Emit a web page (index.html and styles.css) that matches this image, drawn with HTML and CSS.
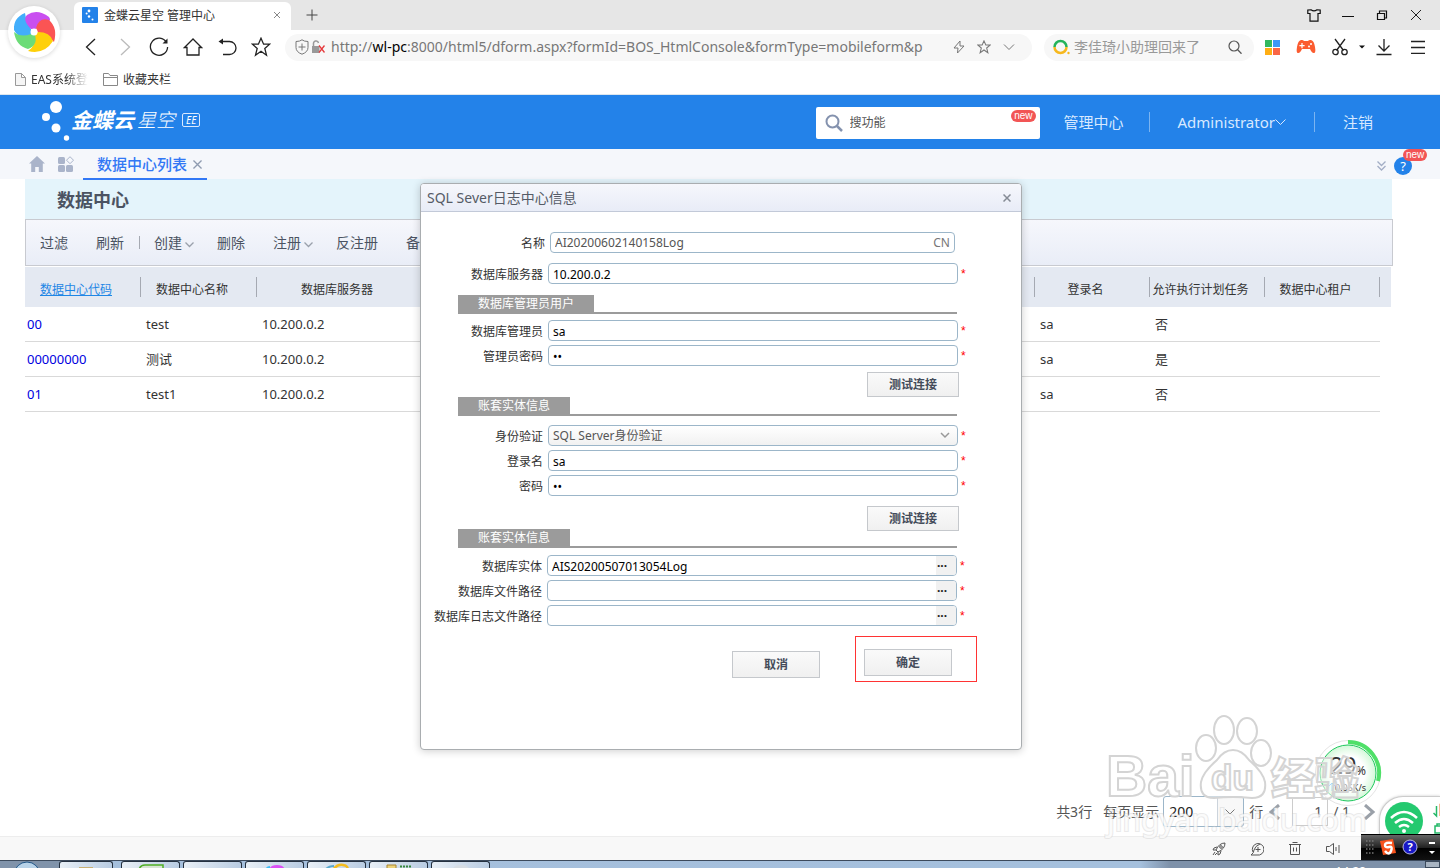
FILE: index.html
```
<!DOCTYPE html>
<html lang="zh-CN">
<head>
  <meta charset="UTF-8">
  <meta name="viewport" content="width=device-width, initial-scale=1.0">
  <title>金蝶云星空 管理中心</title>
  <link rel="stylesheet" href="styles.css">
</head>
<body>

<!-- browser window -->
<div class="browser">
  <div class="tabstrip">
    <div class="tab">
      <svg class="favicon" width="16" height="16" viewBox="0 0 16 16"><rect width="16" height="16" rx="1" fill="#2382e9"/><g fill="#fff"><circle cx="7" cy="4" r="1.4"/><circle cx="4.600" cy="6.500" r="1"/><circle cx="7" cy="9.500" r="1.200"/><circle cx="10.500" cy="12.500" r="1"/></g></svg>
      <span class="tab-title">金蝶云星空 管理中心</span>
      <button class="tab-close" aria-label="关闭标签"><svg width="8" height="8" viewBox="0 0 8 8"><path d="M1 1l6 6M7 1L1 7" stroke="#888" fill="none"/></svg></button>
    </div>
    <button class="tab-add" aria-label="新标签"><svg width="12" height="12" viewBox="0 0 12 12"><path d="M6 .5v11M.5 6h11" stroke="#444" fill="none"/></svg></button>
    <div class="window-buttons">
      <button aria-label="皮肤"><svg width="14" height="13" viewBox="0 0 14 13"><path d="M4 .8L.8 1v3.500H3v7.700h8V4.500h2.200V1L10 .8Q7 3 4 .8z" stroke="#111" stroke-width="1.200" fill="none"/></svg></button>
      <button aria-label="最小化"><svg width="12" height="12" viewBox="0 0 12 12"><path d="M0 7.500h12" stroke="#111"/></svg></button>
      <button aria-label="还原"><svg width="12" height="12" viewBox="0 0 12 12"><path d="M1.500 4.500h7v6h-7zM3.500 4V2h7v7H9" stroke="#111" stroke-width="1.200" fill="none"/></svg></button>
      <button aria-label="关闭"><svg width="12" height="12" viewBox="0 0 12 12"><path d="M1 1l10 10M11 1L1 11" stroke="#222" fill="none"/></svg></button>
    </div>
  </div>

  <div class="navbar">
    <button aria-label="后退"><svg width="20" height="20" viewBox="0 0 20 20"><path d="M14 2L5.500 10l8.500 8" /></svg></button>
    <button class="disabled" aria-label="前进"><svg width="20" height="20" viewBox="0 0 20 20"><path d="M6 2l8.500 8L6 18"/></svg></button>
    <button aria-label="刷新"><svg width="20" height="20" viewBox="0 0 20 20"><path d="M17.500 5.500A8.600 8.600 0 1 0 18.600 10"/><path d="M18.500 1.500v5h-5z" fill="#222" stroke="none"/></svg></button>
    <button aria-label="主页"><svg width="20" height="20" viewBox="0 0 20 20"><path d="M10 2L1.500 10.500H4v7.500h12v-7.500h2.500z"/></svg></button>
    <button aria-label="恢复"><svg width="20" height="20" viewBox="0 0 20 20"><path d="M4 4.500h8.500a6.500 6.500 0 0 1 0 13H6"/><path d="M1.500 4.500L6 1.500v6z" fill="#222" stroke="none"/></svg></button>
    <button aria-label="收藏"><svg width="20" height="20" viewBox="0 0 20 20"><path d="M10 1.200l2.600 6h6l-4.800 4.200 1.700 6.800L10 14.300l-5.500 3.900 1.700-6.800L1.400 7.200h6z"/></svg></button>

    <div class="address">
      <svg width="30" height="16" viewBox="0 0 30 16"><path d="M7 .8Q9 2.500 13 2.500v6q0 4.500-6 6.700-6-2.200-6-6.700v-6Q5 2.500 7 .8zM7 4.500v7M3.500 8h7" fill="none" stroke="#777"/><path d="M17 7h7.500v7H17z" fill="#999"/><path d="M18.500 7V5a2.500 2.500 0 0 1 5-1" fill="none" stroke="#999" stroke-width="1.500"/><path d="M24 6.500l5.500 7M29.500 6.500l-5.500 7" stroke="#e5393c" stroke-width="1.300"/></svg>
      <div class="url" role="textbox" aria-label="地址">http://<b>wl-pc</b>:8000/html5/dform.aspx?formId=BOS_HtmlConsole&amp;formType=mobileform&amp;p</div>
      <svg width="12" height="14" viewBox="0 0 12 14"><path d="M7 1L1 8h4l-.500 5L11 6H7z" fill="none" stroke="#777"/></svg>
      <svg width="14" height="14" viewBox="0 0 20 20"><path d="M10 1.200l2.600 6h6l-4.800 4.200 1.700 6.800L10 14.300l-5.500 3.900 1.700-6.800L1.400 7.200h6z" fill="none" stroke="#777" stroke-width="1.500"/></svg>
      <svg width="12" height="8" viewBox="0 0 12 8"><path d="M1 1.500l5 5 5-5" fill="none" stroke="#777"/></svg>
    </div>

    <div class="quick-search">
      <svg width="17" height="16" viewBox="0 0 17 16"><path d="M1.500 8a6 6 0 0 1 12 0" fill="none" stroke="#25b35b" stroke-width="2.500"/><path d="M1.500 8a6 6 0 0 0 12 0" fill="none" stroke="#f6b81e" stroke-width="2.500"/><circle cx="15.500" cy="14" r="1.200" fill="#f6b81e"/></svg>
      <input type="text" placeholder="李佳琦小助理回来了" aria-label="搜索">
      <svg width="14" height="14" viewBox="0 0 14 14"><circle cx="6" cy="6" r="5" fill="none" stroke="#555" stroke-width="1.200"/><path d="M9.700 9.700l3.800 4" stroke="#555" stroke-width="1.300"/></svg>
    </div>

    <button class="color" aria-label="应用"><svg width="15" height="15" viewBox="0 0 15 15"><path d="M0 0h7v7H0z" fill="#32b85f"/><path d="M8 0h7v7H8z" fill="#3b97f7"/><path d="M0 8h7v7H0z" fill="#ffae14"/><path d="M8 8h7v7H8z" fill="#fa6646"/></svg></button>
    <button class="color" aria-label="游戏"><svg width="20" height="16" viewBox="0 0 20 16"><path d="M5 1q2-.500 3 1h4q1-1.500 3-1 3 .500 4 7 1 6-1 6-2 .500-4-4H6q-2 4.500-4 4-2 0-1-6 1-6.500 4-7z" fill="#fb5c30"/><path d="M5.400 4h1.200v2h2v1.200h-2v2H5.400v-2h-2V6h2z" fill="#fff"/><circle cx="13" cy="7.500" r="1" fill="#fff"/><circle cx="15" cy="5" r="1" fill="#fff"/></svg></button>
    <button aria-label="截图"><svg width="16" height="18" viewBox="0 0 16 18"><path d="M3 1l8.500 11.500M13 1L4.500 12.500"/><circle cx="3.500" cy="14" r="2.700"/><circle cx="12.500" cy="14" r="2.700"/></svg></button>
    <button class="caret" aria-label="更多"><svg width="6" height="4" viewBox="0 0 6 4"><path d="M0 .5h6l-3 3z" fill="#111" stroke="none"/></svg></button>
    <button aria-label="下载"><svg width="16" height="18" viewBox="0 0 16 18"><path d="M8 1v12M2.500 7.500L8 13l5.500-5.500M.500 16.500h15"/></svg></button>
    <button aria-label="菜单"><svg width="14" height="14" viewBox="0 0 14 14"><path d="M0 1.500h14M0 7.500h14M0 13.500h14"/></svg></button>
  </div>

  <div class="bookmarks">
    <a href="#" class="fade"><svg width="11" height="13" viewBox="0 0 11 13"><path d="M.5.500h6l4 4v8H.500zM6.500.500v4h4" fill="#f5f5f5" stroke="#999"/></svg>EAS系统登</a>
    <a href="#"><svg width="15" height="13" viewBox="0 0 15 13"><path d="M.5 12.500V.500h5l1.500 2h7.500v10zM.5 4.500h14" fill="#fff" stroke="#888"/></svg>收藏夹栏</a>
  </div>

  <svg class="browser-logo" width="52" height="52" viewBox="-26 -26 52 52">
    <path d="M-3 3Q-15 8-20-2Q-21-14-9-19Q-8-11-3-3z" fill="#42aefb"/>
    <path d="M-3-3Q-12-12-7-17Q3-24 15-15Q17-12 15-11Q6-13 2-3z" fill="#c94ff0"/>
    <path d="M2-4Q5-15 15-12Q24-4 20 10Q14 2 4 1z" fill="#fb5454"/>
    <path d="M4 0Q16 0 19 9Q10 23-6 19Q3 13 0 3z" fill="#fed00a"/>
    <path d="M1 3Q4 13-6 17Q-18 14-20 0Q-13 6-3 2z" fill="#6cdc78"/>
    <circle r="3.500" fill="#fff"/>
  </svg>
</div>

<!-- management console -->
<div class="app">
  <header class="app-header">
    <svg class="dots" width="30" height="42" viewBox="0 0 30 42" fill="#fff"><circle cx="16" cy="7" r="6"/><circle cx="6" cy="17" r="4"/><circle cx="16" cy="28" r="4.500"/><circle cx="26.500" cy="38" r="2.700"/></svg>
    <div class="brand"><strong>金蝶云</strong><span>星空</span><small>EE</small></div>
    <div class="search">
      <svg width="18" height="18" viewBox="0 0 18 18"><circle cx="7.500" cy="7.500" r="6" fill="none" stroke="#8492ae" stroke-width="2"/><path d="M12 12l5 5" stroke="#8492ae" stroke-width="2.500"/></svg>
      <input type="text" placeholder="搜功能" aria-label="搜功能">
      <span class="badge">new</span>
    </div>
    <nav class="user-nav">
      <a href="#">管理中心</a>
      <a href="#">Administrator<svg width="11" height="7" viewBox="0 0 11 7"><path d="M.5.500l5 5 5-5" fill="none" stroke="#d8e9ff"/></svg></a>
      <a href="#">注销</a>
    </nav>
  </header>

  <div class="page-tabs">
    <svg width="16" height="16" viewBox="0 0 16 16"><path d="M8 0L0 7.500h2.200V16h4v-5h3.600v5h4V7.500H16z" fill="#aab4ca"/></svg>
    <svg width="16" height="16" viewBox="0 0 16 16" fill="#aab4ca"><rect y="1" width="7" height="7" rx="1.500"/><rect y="9" width="7" height="7" rx="1.500"/><rect x="8" y="9" width="7" height="7" rx="1.500"/><path d="M12 .7l3.500 3.500L12 7.700 8.500 4.200z" fill="none" stroke="#aab4ca"/></svg>
    <div class="page-tab">
      <a href="#">数据中心列表</a>
      <button aria-label="关闭"><svg width="9" height="9" viewBox="0 0 10 10"><path d="M.5.500l9 9M9.500.500l-9 9" stroke="#8f9bb0" stroke-width="1.500"/></svg></button>
    </div>
    <div class="page-help">
      <svg width="9" height="10" viewBox="0 0 9 10"><path d="M.5.500l4 4 4-4M.5 5l4 4 4-4" fill="none" stroke="#a3aec5" stroke-width="1.300"/></svg>
      <button class="help">?<span class="badge">new</span></button>
    </div>
  </div>

  <main class="content">
    <h1>数据中心</h1>
    <div class="toolbar">
      <button>过滤</button>
      <button>刷新</button>
      <i class="sep"></i>
      <button class="has-menu">创建<svg width="9" height="6" viewBox="0 0 9 6"><path d="M.5.500l4 4 4-4"/></svg></button>
      <button>删除</button>
      <button class="has-menu">注册<svg width="9" height="6" viewBox="0 0 9 6"><path d="M.5.500l4 4 4-4"/></svg></button>
      <button>反注册</button>
      <button>备份</button>
    </div>
    <table>
      <colgroup><col class="c1"><col class="c1"><col class="c3"><col><col class="c5"><col class="c5"><col class="c5"><col class="edge"></colgroup>
      <thead>
        <tr><th class="sorted"><a href="#">数据中心代码</a></th><th>数据中心名称</th><th>数据库服务器</th><th></th><th>登录名</th><th>允许执行计划任务</th><th>数据中心租户</th><th></th></tr>
      </thead>
      <tbody>
        <tr><td><a href="#">00</a></td><td>test</td><td>10.200.0.2</td><td></td><td>sa</td><td>否</td><td></td><td></td></tr>
        <tr><td><a href="#">00000000</a></td><td>测试</td><td>10.200.0.2</td><td></td><td>sa</td><td>是</td><td></td><td></td></tr>
        <tr><td><a href="#">01</a></td><td>test1</td><td>10.200.0.2</td><td></td><td>sa</td><td>否</td><td></td><td></td></tr>
      </tbody>
    </table>
  </main>

  <div class="pager">
    <span>共3行</span>
    <label for="pageSize">每页显示</label>
    <div class="size-select">
      <select id="pageSize"><option>200</option></select>
      <svg width="10" height="6" viewBox="0 0 10 6"><path d="M.5.500l4.500 4.500L9.500.500" fill="none" stroke="#777"/></svg>
    </div>
    <span class="unit">行</span>
    <button aria-label="上一页"><svg width="12" height="16" viewBox="0 0 12 16"><path d="M11 1L3 8l8 7" fill="none" stroke="#9aa0a8" stroke-width="3"/></svg></button>
    <input type="text" value="1" aria-label="页码">
    <span class="total">/ 1</span>
    <button aria-label="下一页"><svg width="12" height="16" viewBox="0 0 12 16"><path d="M1 1l8 7-8 7" fill="none" stroke="#9aa0a8" stroke-width="3"/></svg></button>
  </div>

  <form class="dialog">
    <div class="dialog-title">
      <h2>SQL Sever日志中心信息</h2>
      <button type="button" aria-label="关闭"><svg width="8" height="8" viewBox="0 0 8 8"><path d="M.5.500l7 7M7.500.500l-7 7" stroke="#858b95" stroke-width="1.500"/></svg></button>
    </div>
    <div class="dialog-body">
      <div class="field name">
        <label for="name">名称</label>
        <div class="box"><input type="text" id="name" value="AI20200602140158Log"><span class="lang">CN</span></div>
      </div>
      <div class="field server">
        <label for="server">数据库服务器</label>
        <div class="box"><input type="text" id="server" value="10.200.0.2"></div><em>*</em>
      </div>

      <div class="section first"><span>数据库管理员用户</span></div>
      <div class="field">
        <label for="admin">数据库管理员</label>
        <div class="box"><input type="text" id="admin" value="sa"></div><em>*</em>
      </div>
      <div class="field">
        <label for="adminPwd">管理员密码</label>
        <div class="box"><input type="password" id="adminPwd" value="sa"></div><em>*</em>
      </div>
      <button type="button" class="btn test">测试连接</button>

      <div class="section"><span>账套实体信息</span></div>
      <div class="field">
        <label for="auth">身份验证</label>
        <div class="box select"><select id="auth"><option>SQL Server身份验证</option></select><svg width="10" height="7" viewBox="0 0 10 7"><path d="M1 1l4 4 4-4" fill="none" stroke="#999" stroke-width="1.500"/></svg></div><em>*</em>
      </div>
      <div class="field">
        <label for="login">登录名</label>
        <div class="box"><input type="text" id="login" value="sa"></div><em>*</em>
      </div>
      <div class="field">
        <label for="pwd">密码</label>
        <div class="box"><input type="password" id="pwd" value="sa"></div><em>*</em>
      </div>
      <button type="button" class="btn test second">测试连接</button>

      <div class="section last"><span>账套实体信息</span></div>
      <div class="field path">
        <label for="entity">数据库实体</label>
        <div class="box"><input type="text" id="entity" value="AIS20200507013054Log"><button type="button" class="more" aria-label="选择">···</button></div><em>*</em>
      </div>
      <div class="field path">
        <label for="dbPath">数据库文件路径</label>
        <div class="box"><input type="text" id="dbPath"><button type="button" class="more" aria-label="选择">···</button></div><em>*</em>
      </div>
      <div class="field path">
        <label for="logPath">数据库日志文件路径</label>
        <div class="box"><input type="text" id="logPath"><button type="button" class="more" aria-label="选择">···</button></div><em>*</em>
      </div>

      <div class="actions">
        <button type="button" class="btn">取消</button>
        <div class="mark"><button type="submit" class="btn">确定</button></div>
      </div>
    </div>
  </form>
</div>

<footer class="statusbar">
  <button aria-label="加速"><svg width="14" height="14" viewBox="0 0 14 14"><path d="M4 8Q7 1 13 1q0 6-7 9zM5 5L2 6 1 8l3 0M9 9l-1 3-2 1v-3M3 10l-2 3M5 11l-2 2"/><circle cx="9" cy="5" r="1.300"/></svg></button>
  <button aria-label="清理"><svg width="14" height="14" viewBox="0 0 14 14"><path d="M3 10A5.800 5.800 0 1 1 7 13H1Q4 11 4 8q1-4 6-6M8 5v5M5.500 7.500h5"/></svg></button>
  <button aria-label="回收站"><svg width="12" height="14" viewBox="0 0 12 14"><path d="M0 2.500h12M3.500.500h5M1.500 2.500v10h9v-10M4.500 5.500v4M7.500 5.500v4"/></svg></button>
  <button aria-label="声音"><svg width="14" height="12" viewBox="0 0 14 12"><path d="M.5 3.500h3l4-3v11l-4-3h-3zM10 4v4M13 2v8"/></svg></button>
</footer>

<div class="taskbar">
  <svg class="start" width="28" height="8" viewBox="0 0 28 8"><circle cx="14" cy="14" r="13" fill="#b8d3e9" stroke="#205586"/></svg>
  <div class="task"><svg width="16" height="8" viewBox="0 0 16 8"><path d="M1 5h14v3H1z" fill="#c9b073"/></svg></div>
  <div class="task"><svg width="26" height="8" viewBox="0 0 26 8"><path d="M1 8q1-5 6-5h18v5" fill="#d8e4d4" stroke="#4fae25" stroke-width="1.500"/></svg></div>
  <div class="task"></div>
  <div class="task"><svg width="22" height="8" viewBox="0 0 22 8"><path d="M1 8q1-4 5-4v4z" fill="#3dbcf5"/><path d="M5 8q1-5 8-5t8 5z" fill="#dc50f5"/></svg></div>
  <div class="task"><svg width="24" height="8" viewBox="0 0 24 8"><path d="M1 7q3-3 8-3" stroke="#59a8ce" stroke-width="2" fill="none"/><path d="M8 8q4-6 10-5t4 5" stroke="#f4bc1f" stroke-width="2.500" fill="none"/></svg></div>
  <div class="task"><svg width="26" height="8" viewBox="0 0 26 8"><path d="M1 3h9v5H1z" fill="#ecd379" stroke="#a98430"/><path d="M14 4.500h12" stroke="#37883d" stroke-width="2" stroke-dasharray="2 1"/></svg></div>
  <div class="task"><svg width="20" height="8" viewBox="0 0 20 8"><path d="M1 8q2-5 9-5t9 5z" fill="#d7dde3"/></svg></div>
  <time>14:28</time>
  <i class="desktop"></i>
</div>

<!-- floating widgets over the window -->
<svg class="speed-ball" width="68" height="68" viewBox="-34 -34 68 68">
  <defs><radialGradient id="glow"><stop offset="0.600" stop-color="#fff"/><stop offset="1" stop-color="#d3f8d8"/></radialGradient></defs>
  <circle r="32.500" fill="#fff" stroke="#e4e4e4"/>
  <circle r="28" fill="url(#glow)" stroke="#1fc75e"/>
  <path d="M0-31A31 31 0 0 1 30 8" fill="none" stroke="#4fe068" stroke-width="4"/>
  <text x="-18" y="1" class="big">29</text><text x="8" y="2" class="unit">%</text>
  <path d="M-16 18v-8M-19 13l3-3 3 3" stroke="#55b2ff" fill="none"/><text x="-13" y="18" class="rate">0.05K/s</text>
</svg>

<div class="wifi">
  <svg width="40" height="40" viewBox="0 0 40 40"><circle cx="20" cy="20" r="19" fill="#24c96f"/><path d="M7 17q13-12 26 0M11 22q9-8 18 0M15 26q5-4 10 0" fill="none" stroke="#fff" stroke-width="2.500"/><circle cx="20" cy="30" r="2" fill="#fff"/></svg>
  <svg width="12" height="34" viewBox="0 0 12 34"><path d="M3.500 5v10l-3-3" fill="none" stroke="#25b868" stroke-width="1.500"/><path d="M7.500 15V5l3 3" fill="none" stroke="#ee742d" stroke-width="2"/><path d="M2 25h9v7H2zM4 25v-2h4v2" fill="none" stroke="#25b868" stroke-width="1.500"/></svg>
</div>

<svg class="watermark" width="270" height="130" viewBox="0 0 270 130">
  <g class="paw"><ellipse cx="104" cy="36" rx="10" ry="13"/><ellipse cx="122" cy="18" rx="10" ry="14"/><ellipse cx="145" cy="19" rx="10" ry="13"/><ellipse cx="159" cy="41" rx="10" ry="13"/><path d="M131 38q9 0 16 10 14 12 16 22 2 16-13 16-10-1-19-1t-19 1q-15 0-13-16 2-10 16-22 7-10 16-10z"/></g>
  <text x="4" y="84" class="bai">Bai</text>
  <text x="109" y="78" class="du">du</text>
  <text x="169" y="83" class="jy">经验</text>
  <text x="5" y="119" class="site">jingyan.baidu.com</text>
</svg>

<div class="ime">
  <svg width="79" height="26" viewBox="0 0 79 26">
    <path d="M5 6h8M5 10h8M5 14h8M5 18h8" stroke="#777" stroke-width="1.500" stroke-dasharray="1.500 1.500"/>
    <path d="M19 6l13-2 3 14-13 2z" fill="#f8531d"/>
    <path d="M31 8q-7-1-7 2t4 2 2 4-6 0" fill="none" stroke="#fff" stroke-width="2.500"/>
    <circle cx="49" cy="12" r="7" fill="#1818c6" stroke="#b8b8df"/>
    <text x="49" y="16" text-anchor="middle" class="q">?</text>
    <path d="M68 8h6" stroke="#fff" stroke-width="2"/><path d="M68 16h6l-3 3z" fill="#fff"/>
  </svg>
</div>

</body>
</html>
```
FILE: styles.css
```
* {
  box-sizing: border-box;
}

body {
  margin: 0;
  min-height: 100vh;
  display: flex;
  flex-direction: column;
  position: relative;
  overflow: hidden;
  font-family: "Noto Sans", "Noto Sans CJK SC", sans-serif;
  font-size: 12px;
  line-height: 16px;
  color: #333;
  background: #fff;
}

button, input, select {
  font-family: inherit;
  font-size: inherit;
  line-height: inherit;
  color: inherit;
  margin: 0;
  padding: 0;
  border: none;
  background: none;
  outline: none;
}

button {
  cursor: pointer;
}

select {
  appearance: none;
}

a {
  text-decoration: none;
  color: inherit;
}

svg {
  flex: none;
}

/* browser */
.browser {
  position: relative;
}

.tabstrip {
  display: flex;
  align-items: center;
  height: 30px;
  padding: 0 7px 0 74px;
  background: #e6e6e6;
}

.tab {
  display: flex;
  align-items: center;
  width: 217px;
  height: 28px;
  margin-top: 2px;
  padding: 0 10px 2px 8px;
  background: #fff;
  border-radius: 6px 6px 0 0;
}

.tab-title {
  flex: 1;
  margin-left: 6px;
  padding-top: 2px;
}

.tab-close {
  display: flex;
}

.tab-add {
  display: flex;
  margin-left: 15px;
}

.window-buttons {
  display: flex;
  margin-left: auto;
}

.window-buttons button, .navbar button {
  display: flex;
  align-items: center;
  justify-content: center;
  width: 34px;
}

.navbar {
  display: flex;
  align-items: center;
  height: 34px;
  padding: 0 5px 0 74px;
}

.navbar button svg {
  fill: none;
  stroke: #222;
  stroke-width: 1.3;
}

.navbar button.disabled svg {
  stroke: #bbb;
}

.navbar button.color svg {
  stroke: none;
}

.navbar button.caret {
  width: 10px;
}

.address, .quick-search {
  display: flex;
  align-items: center;
  height: 27px;
  border-radius: 14px;
  background: #f7f7f7;
}

.address {
  flex: 1;
  min-width: 0;
  gap: 12px;
  margin-left: 7px;
  padding: 0 17px 0 10px;
}

.url {
  flex: 1;
  min-width: 0;
  margin-left: -6px;
  overflow: hidden;
  white-space: nowrap;
  font-size: 14px;
  line-height: 20px;
  color: #777;
}

.url b {
  font-weight: normal;
  color: #000;
}

.quick-search {
  width: 210px;
  margin: 0 1px 0 12px;
  padding: 0 12px 0 9px;
}

.quick-search input {
  flex: 1;
  min-width: 0;
  margin-left: 4px;
  font-size: 14px;
}

.quick-search input::placeholder {
  color: #999;
}

.bookmarks {
  display: flex;
  align-items: center;
  gap: 15px;
  height: 31px;
  padding: 1px 15px 0;
  border-bottom: 1px solid #dde6ee;
}

.bookmarks a {
  display: flex;
  align-items: center;
  gap: 5px;
}

.bookmarks .fade {
  -webkit-mask-image: linear-gradient(to right, #000 70%, transparent);
  mask-image: linear-gradient(to right, #000 70%, transparent);
}

.browser-logo {
  position: absolute;
  left: 8px;
  top: 6px;
  border-radius: 50%;
  background: #fff;
  box-shadow: 0 1px 4px rgba(0, 0, 0, 0.15);
}

/* app header */
.app {
  position: relative;
  flex: 1;
  display: flex;
  flex-direction: column;
}

.app-header {
  display: flex;
  align-items: center;
  height: 54px;
  padding: 0 67px 0 40px;
  background: #2382e9;
  color: #d8e9ff;
}

.dots {
  margin-bottom: 2px;
}

.brand {
  display: flex;
  align-items: center;
  margin: 0 0 4px 1px;
  color: #fff;
  line-height: 24px;
}

.brand strong {
  font-size: 21px;
  font-style: italic;
}

.brand span {
  margin-left: 3px;
  font-size: 19px;
  font-style: italic;
  font-weight: 300;
}

.brand small {
  margin-left: 7px;
  padding: 0 3px;
  border: 1px solid #d8e9ff;
  border-radius: 2px;
  font-size: 10px;
  line-height: 12px;
  font-style: italic;
}

.search {
  position: relative;
  display: flex;
  align-items: center;
  width: 224px;
  height: 32px;
  margin: 2px 0 0 auto;
  padding-left: 9px;
  background: #fff;
  border-radius: 2px;
}

.search input {
  flex: 1;
  min-width: 0;
  margin-left: 7px;
  color: #333;
}

.search input::placeholder {
  color: #555;
}

.badge {
  position: absolute;
  height: 12px;
  padding: 0 3px;
  border-radius: 6px;
  background: #f25555;
  color: #fff;
  font: 10px/11px "Liberation Sans", sans-serif;
}

.search .badge {
  top: 3px;
  right: 4px;
}

.user-nav {
  display: flex;
  align-items: center;
  font-size: 15px;
  line-height: 20px;
}

.user-nav a {
  display: flex;
  align-items: center;
  padding: 0 28px;
  border-right: 1px solid #7bb4f1;
}

.user-nav a:first-child {
  padding-left: 24px;
  padding-right: 25px;
}

.user-nav a:last-child {
  padding-right: 0;
  border-right: none;
}

/* tabs under the header */
.page-tabs {
  display: flex;
  align-items: center;
  gap: 13px;
  height: 30px;
  padding: 0 28px 0 29px;
  background: #f5f7fb;
}

.page-tab {
  display: flex;
  align-items: center;
  gap: 6px;
  height: 31px;
  margin: 1px 0 0 -4px;
  padding: 0 5px 0 14px;
  border-bottom: 2px solid #3278f5;
  color: #3278f5;
  font-size: 15px;
  font-weight: 500;
  z-index: 1;
}

.page-tab button {
  padding-top: 2px;
}

.page-tab button, .dialog-title button, .toolbar button, .statusbar button, .pager button {
  display: flex;
  align-items: center;
}

.page-help {
  display: flex;
  align-items: center;
  gap: 8px;
  margin: 4px 0 0 auto;
}

.help {
  position: relative;
  width: 18px;
  height: 18px;
  border-radius: 50%;
  background: #2382e9;
  color: #fff;
  font-size: 13px;
}

.help .badge {
  left: 9px;
  top: -8px;
}

/* list */
.content {
  margin: 0 47px 0 25px;
}

h1 {
  margin: 0 1px 0 0;
  padding: 0 32px;
  height: 40px;
  background: #e4f4fb;
  color: #4b5362;
  font-size: 18px;
  line-height: 42px;
}

.toolbar {
  display: flex;
  align-items: center;
  height: 47px;
  padding-left: 14px;
  border: 1px solid #c8cad0;
  background: linear-gradient(#f6f7fc, #e9edf7);
  color: #4b5362;
  font-size: 14px;
}

.toolbar button {
  margin-right: 28px;
}

.toolbar .has-menu {
  gap: 3px;
  margin-right: 23px;
}

.toolbar svg {
  margin-top: 4px;
  fill: none;
  stroke: #9aa0ab;
  stroke-width: 1.3;
}

.sep {
  width: 1px;
  height: 13px;
  margin: 0 14px 0 -13px;
  background: #a5a9b2;
}

.content table {
  width: calc(100% - 2px);
  margin-top: 1px;
  border-spacing: 0;
  table-layout: fixed;
}

.c1 {
  width: 116px;
}

.c3 {
  width: 160px;
}

.c5 {
  width: 115px;
}

.edge {
  width: 11px;
}

th {
  height: 40px;
  padding: 6px 0 0;
  background: linear-gradient(#a5a9b2, #a5a9b2) right center / 1px 20px no-repeat #e4e9f2;
  font-weight: normal;
  white-space: nowrap;
}

th:nth-child(1), th:nth-child(2), th:nth-child(5), th:nth-child(6), th:nth-child(7) {
  padding-right: 14px;
}

th:nth-child(3), th:last-child {
  background-image: none;
}

th a {
  color: #1e86e5;
  text-decoration: underline;
}

td {
  height: 35px;
  padding: 0 5px;
  border-bottom: 1px solid #d9d9d9;
  font-size: 13px;
}

td:first-child {
  padding-left: 2px;
}

td:last-child {
  border-bottom: none;
}

td a {
  color: #0000e0;
}

/* pager */
.pager {
  display: flex;
  align-items: center;
  height: 31px;
  margin: auto 64px 9px 0;
  justify-content: flex-end;
  color: #555;
  font-size: 14px;
}

.pager label {
  margin: 0 4px 0 11px;
}

.size-select {
  display: flex;
  align-items: center;
  height: 31px;
  width: 81px;
  border: 1px solid #9cb6c9;
  border-radius: 3px;
  background: linear-gradient(to right, #fff 53px, #ccd4dc 53px, #ccd4dc 54px, #f8f8f8 54px);
}

.size-select select {
  width: 61px;
  height: 29px;
  padding-left: 5px;
  color: #222;
}

.pager .unit {
  margin: 0 5px;
}

.pager input {
  width: 36px;
  height: 29px;
  margin-left: 12px;
  padding-right: 5px;
  border: 1px solid #ccc;
  text-align: right;
}

.pager .total {
  margin: 0 14px 0 5px;
}

/* dialog */
.dialog {
  position: absolute;
  top: 88px;
  left: 2px;
  right: 0;
  width: 602px;
  margin: 0 auto;
  border: 1px solid #a9adb0;
  border-radius: 4px;
  background: #fff;
  box-shadow: 0 1px 9px rgba(0, 0, 0, 0.2);
}

.dialog-title {
  display: flex;
  align-items: center;
  justify-content: space-between;
  height: 28px;
  padding: 0 10px 0 6px;
  border-bottom: 1px solid #c2c9d8;
  border-radius: 3px 3px 0 0;
  background: linear-gradient(#f6f7fc, #e8ecf7);
}

.dialog-title h2 {
  margin: 0;
  padding-top: 1px;
  color: #555b66;
  font-size: 14px;
  font-weight: normal;
  line-height: 20px;
}

.dialog-body {
  display: flex;
  flex-direction: column;
  padding: 20px 0 67px;
}

.field {
  display: grid;
  grid-template-columns: 122px 410px auto;
  column-gap: 5px;
  align-items: center;
  height: 21px;
  margin-bottom: 4px;
}

.field.path {
  grid-template-columns: 121px 410px auto;
}

.field label {
  padding-top: 2px;
  text-align: right;
  white-space: nowrap;
}

.field.name {
  grid-template-columns: 124px 405px;
  margin-bottom: 10px;
}

.field em {
  margin-left: -2px;
  color: #f00;
  font: 12px/16px "Liberation Sans", sans-serif;
}

.box {
  display: flex;
  align-items: center;
  height: 21px;
  border: 1px solid #9cb6c9;
  border-radius: 4px;
  overflow: hidden;
  background: #fff;
}

.box input, .box select {
  flex: 1;
  min-width: 0;
  height: 19px;
  padding: 1px 4px 0;
  color: #000;
}

.box select, .name .box input {
  padding-top: 0;
  color: #555;
}

.box.select {
  padding-right: 7px;
  background: linear-gradient(#fff, #f1f1f1);
}

.lang {
  padding-right: 4px;
  color: #777;
}

.more {
  width: 20px;
  height: 19px;
  padding-right: 8px;
  background: #f1f1f1;
  color: #222;
  font-weight: bold;
}

.section {
  width: 499px;
  margin: 0 0 9px 37px;
  border-bottom: 2px solid #9b9b9b;
}

.section.first {
  margin-top: 7px;
  margin-bottom: 6px;
}

.section.last {
  margin-top: -2px;
  margin-bottom: 7px;
}

.section span {
  display: inline-block;
  height: 17px;
  padding: 0 20px;
  background: #9b9b9b;
  color: #fff;
  line-height: 18px;
  vertical-align: top;
}

.btn {
  width: 88px;
  height: 27px;
  padding-top: 1px;
  border: 1px solid #c5c8cc;
  background: linear-gradient(#fafafa, #f0f0f0);
  color: #444c5a;
  font-weight: 600;
}

.btn.test {
  width: 92px;
  height: 25px;
  margin: 2px 0 0 446px;
}

.btn.second {
  margin-top: 6px;
}

.actions {
  display: flex;
  align-items: center;
  justify-content: flex-end;
  gap: 35px;
  margin: 6px 44px 0 0;
}

.actions > .btn {
  margin-top: 11px;
}

.mark {
  display: flex;
  width: 122px;
  height: 46px;
  padding: 12px 8px;
  border: 1px solid #f33;
  align-items: flex-start;
}

/* bottom bars */
.statusbar {
  display: flex;
  align-items: center;
  justify-content: flex-end;
  height: 24px;
  padding: 0 88px 0 0;
  border-top: 1px solid #ededed;
  background: #f8f8f8;
}

.statusbar button {
  justify-content: center;
  width: 38px;
}

.statusbar svg {
  fill: none;
  stroke: #555;
}

.taskbar {
  display: flex;
  gap: 3px;
  height: 8px;
  overflow: hidden;
  border-top: 1px solid #3c4a5c;
  background: linear-gradient(to right, #8093aa 60px, #a5bfdc 61px, #a5c0dd 1140px, #7e91a9 1170px, #7e91a9);
}

.start {
  margin: 0 15px 0 13px;
}

.task {
  display: flex;
  justify-content: center;
  width: 59px;
  border: 1px solid #253140;
  border-bottom: none;
  border-radius: 3px 3px 0 0;
  background: linear-gradient(to right, #e8eff6, #b9cce2);
}

.task:nth-child(2) {
  width: 54px;
  margin-right: 5px;
}

.taskbar time {
  margin: 4px 0 0 auto;
  padding: 0 56px 0 0;
  color: #fff;
  line-height: 14px;
}

.desktop {
  width: 15px;
  border: 1px solid #3c4a5c;
  background: #a8b4c2;
}

/* widgets */
.speed-ball {
  position: absolute;
  right: 58px;
  bottom: 61px;
}

.speed-ball text {
  fill: #333;
}

.speed-ball .big {
  font-size: 23px;
}

.speed-ball .unit {
  font-size: 12px;
}

.speed-ball .rate {
  font-size: 9px;
}

.wifi {
  position: absolute;
  right: 0;
  bottom: 34px;
  display: flex;
  gap: 9px;
  width: 61px;
  height: 38px;
  padding: 4px 0 0 4px;
  overflow: hidden;
  border: 1px solid #ccc;
  border-width: 1px 0 0 1px;
  border-radius: 24px 0 0 0;
  background: #fff;
  box-shadow: 0 0 3px rgba(0, 0, 0, 0.2);
}

.watermark {
  position: absolute;
  right: 68px;
  bottom: 26px;
  fill: rgba(255, 255, 255, 0.5);
  stroke: #d4d4d4;
  stroke-width: 2;
  pointer-events: none;
}

.watermark text {
  font-family: "Liberation Sans", "Noto Sans CJK SC", sans-serif;
  font-weight: bold;
}

.watermark .bai {
  font-size: 57px;
}

.watermark .du {
  font-size: 35px;
}

.watermark .jy {
  font-size: 44px;
  font-weight: 900;
}

.watermark .site {
  font-family: "Noto Sans", sans-serif;
  font-size: 30px;
  font-weight: normal;
  stroke-width: 2;
  paint-order: stroke;
  fill: rgba(255, 255, 255, 0.8);
  stroke: rgba(200, 200, 200, 0.4);
}

.ime {
  position: absolute;
  right: 0;
  bottom: 8px;
  height: 26px;
  border-top: 1px solid #000;
  background: linear-gradient(#666, #222 50%, #000 51%, #111);
}

.ime .q {
  fill: #fff;
  font-size: 11px;
  font-weight: bold;
}
```
